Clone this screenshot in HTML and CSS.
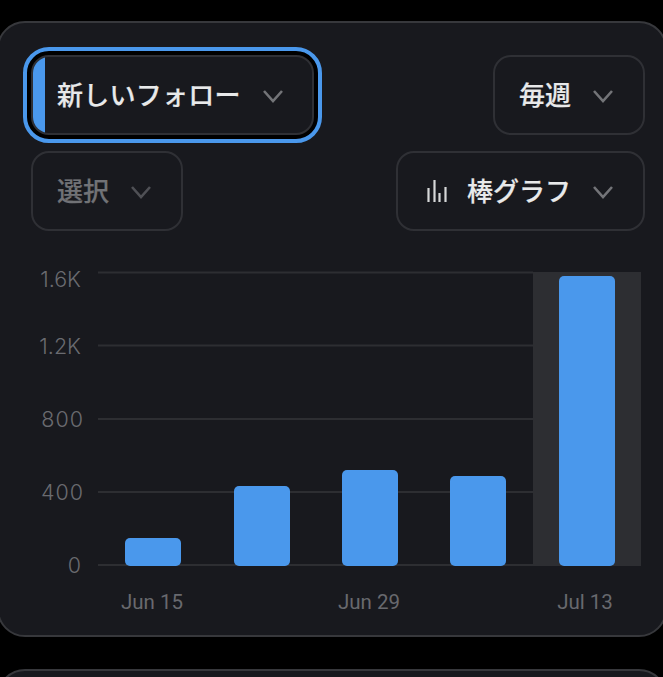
FILE: index.html
```html
<!DOCTYPE html>
<html lang="ja">
<head>
<meta charset="utf-8">
<title>新しいフォロー</title>
<link rel="stylesheet" href="styles.css">
</head>
<body>
<main class="stack">
  <section class="card">
    <div class="controls">
      <div class="row">
        <div class="focus-ring">
          <button class="select select-metric">
            <span class="accent"></span>
            <span class="label label-long">新しいフォロー</span>
            <svg class="chev" viewBox="0 0 24 14"><path d="M3 2l9 10 9-10"/></svg>
          </button>
        </div>
        <button class="select select-period">
          <span class="label">毎週</span>
          <svg class="chev" viewBox="0 0 24 14"><path d="M3 2l9 10 9-10"/></svg>
        </button>
      </div>
      <div class="row">
        <button class="select select-pick">
          <span class="label muted">選択</span>
          <svg class="chev dim" viewBox="0 0 24 14"><path d="M3 2l9 10 9-10"/></svg>
        </button>
        <button class="select select-type">
          <svg class="bars-icon" viewBox="0 0 20 22"><path d="M1.500 8v14M7.500 0v22M12.500 13v9M18.500 7v15"/></svg>
          <span class="label">棒グラフ</span>
          <svg class="chev" viewBox="0 0 24 14"><path d="M3 2l9 10 9-10"/></svg>
        </button>
      </div>
    </div>
    <svg class="chart" viewBox="0 0 665 382" width="665" height="382">
      <rect class="hl" x="534" y="41" width="108" height="294"/>
      <g class="grid">
        <path d="M99 41.500H534M99 114.500H534M99 188H534M99 261H534M99 334H534"/>
      </g>
      <g class="ylabels">
        <text x="82" y="56">1.6K</text>
        <text x="82" y="123">1.2K</text>
        <text class="wide" x="85" y="196">800</text>
        <text class="wide" x="85" y="269">400</text>
        <text x="82" y="342">0</text>
      </g>
      <g class="barset">
        <rect x="126" y="307" width="56" height="28" rx="5"/>
        <rect x="235" y="255" width="56" height="80" rx="5"/>
        <rect x="343" y="239" width="56" height="96" rx="5"/>
        <rect x="451" y="245" width="56" height="90" rx="5"/>
        <rect x="560" y="45" width="56" height="290" rx="5"/>
      </g>
      <g class="xlabels">
        <text x="153" y="378">Jun 15</text>
        <text x="370" y="378">Jun 29</text>
        <text x="586" y="378">Jul 13</text>
      </g>
    </svg>
  </section>
  <section class="card card-next"></section>
</main>
</body>
</html>
```
FILE: styles.css
```css
* { box-sizing: border-box; }
html, body {
  margin: 0;
  height: 100%;
  background: #000;
  overflow: hidden;
}
body {
  font-family: "Inter", "Noto Sans CJK JP", sans-serif;
}
.stack {
  display: flex;
  flex-direction: column;
  gap: 32px;
  width: 670px;
  margin-left: -3px;
  padding-top: 21px;
}
.card {
  flex: none;
  height: 616px;
  background: #18191e;
  border: 2px solid #37383c;
  border-radius: 28px;
  padding: 32px 20px 0 32px;
  overflow: hidden;
}
.card-next { height: 100px; }
.controls {
  display: flex;
  flex-direction: column;
  gap: 16px;
}
.row {
  display: flex;
  justify-content: space-between;
  align-items: center;
  height: 80px;
}
.focus-ring {
  margin: -8px;
  padding: 4px;
  border: 4px solid #4a98ec;
  border-radius: 26px;
  background: #000;
}
.select {
  display: flex;
  align-items: center;
  height: 80px;
  padding: 0 0 0 24px;
  background: #18191e;
  border: 2px solid #2f3035;
  border-radius: 18px;
  font: inherit;
  font-size: 26px;
  font-weight: 500;
  color: #e8e9ea;
  position: relative;
  overflow: hidden;
}
.select-metric { width: 283px; }
.select-period { width: 152px; }
.select-pick { width: 152px; }
.select-type { width: 249px; padding-left: 29px; }
.accent {
  position: absolute;
  left: 0;
  top: 0;
  bottom: 0;
  width: 12px;
  background: #4a98ec;
}
.label {
  white-space: nowrap;
  line-height: 1;
  padding-top: 1px;
  -webkit-text-stroke: 0.2px currentColor;
}
.label-long { letter-spacing: 0.25px; }
.muted { color: #717276; }
.chev {
  flex: none;
  width: 24px;
  height: 14px;
  margin-left: 20px;
  margin-top: 2px;
  fill: none;
  stroke: #737478;
  stroke-width: 2.600;
}
.chev.dim { stroke: #4f5055; }
.bars-icon {
  flex: none;
  width: 20px;
  height: 22px;
  margin-right: 20px;
  fill: none;
  stroke: #d6d7d8;
  stroke-width: 2.200;
}
.chart {
  display: block;
  margin: 0 0 0 -32px;
  width: 665px;
  height: 382px;
}
.hl { fill: #2d2e32; }
.grid path { fill: none; stroke: #2d2e32; stroke-width: 2; }
.barset { fill: #4a98ec; }
.ylabels text {
  fill: #6a6b70;
  font-size: 21.500px;
  font-weight: 300;
  text-anchor: end;
  font-family: "Inter", sans-serif;
}
.ylabels .wide { letter-spacing: 1px; }
.xlabels text {
  fill: #68696e;
  font-size: 20.500px;
  font-weight: 400;
  text-anchor: middle;
  font-family: "Roboto", sans-serif;
}
```
